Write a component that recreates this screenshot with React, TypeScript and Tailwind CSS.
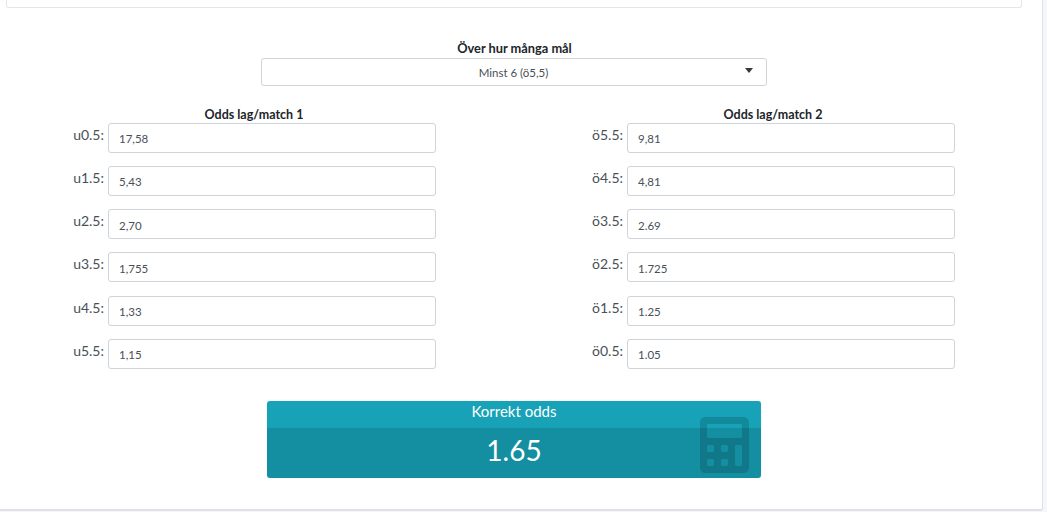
import { FaCalculator } from "react-icons/fa";

const leftRows = [
  ["u0.5:", "17,58"],
  ["u1.5:", "5,43"],
  ["u2.5:", "2,70"],
  ["u3.5:", "1,755"],
  ["u4.5:", "1,33"],
  ["u5.5:", "1,15"],
];

const rightRows = [
  ["ö5.5:", "9,81"],
  ["ö4.5:", "4,81"],
  ["ö3.5:", "2.69"],
  ["ö2.5:", "1.725"],
  ["ö1.5:", "1.25"],
  ["ö0.5:", "1.05"],
];

function OddsColumn({ title, rows }: { title: string; rows: string[][] }) {
  return (
    <div className="w-[328px]">
      {/* title is centred over label + input, not the input alone */}
      <div className="mr-[36px] text-center text-[12.5px] leading-[15px] font-bold text-[#212529] h-[15.6px]">{title}</div>
      <div className="flex flex-col gap-[13.25px]">
        {rows.map(([label, value]) => (
          <div key={label} className="relative">
            <span className="absolute right-[332px] top-[2px] text-[14px] leading-[20px] text-[#495057] whitespace-nowrap">{label}</span>
            <input
              readOnly
              defaultValue={value}
              className="block w-full h-[30px] pl-[10px] pt-[2px] border border-[#ced4da] rounded-[3px] bg-white text-[11.5px] text-[#495057] outline-none"
            />
          </div>
        ))}
      </div>
    </div>
  );
}

export default function App() {
  return (
    <div className="w-[1047px] h-[512px] overflow-hidden bg-[#f4f6f9] font-['Lato',sans-serif]">
      <div className="w-[1043px] h-[511px] bg-white border-r border-b-2 border-[#dee2e6] rounded-br-[3px]">
        {/* card above, cut off by the top of the page */}
        <div className="ml-[6px] w-[1016px] h-[8px] border-x border-b border-[#e3e6ea] rounded-b-[3px] bg-white"></div>

        <div className="mt-[32px] flex flex-col items-center pr-[15px]">
          <div className="pl-[2px] text-[12.8px] leading-[16px] font-bold text-[#212529]">Över hur många mål</div>
          <div className="relative mt-[2px] w-[506px] h-[28px] pt-[2px] border border-[#ced4da] rounded-[3px] flex items-center justify-center text-[11.5px] text-[#495057]">
            Minst 6 (ö5,5)
            <span className="absolute right-[13px] top-[9px] w-0 h-0 border-x-[4px] border-x-transparent border-t-[5px] border-t-[#343a40]"></span>
          </div>
        </div>

        <div className="mt-[21px] ml-[108px] flex gap-[191px]">
          <OddsColumn title="Odds lag/match 1" rows={leftRows} />
          <OddsColumn title="Odds lag/match 2" rows={rightRows} />
        </div>

        <div className="relative mt-[32.15px] ml-[267px] w-[494px] h-[77px] rounded-[3px] overflow-hidden shadow-[0_0_1px_rgba(0,0,0,0.2)] text-white text-center">
          <div className="h-[27px] bg-[#17a2b8] text-[15px] leading-[20px]">Korrekt odds</div>
          <div className="h-[50px] bg-[#148ea1] text-[28px] leading-[44px]">1.65</div>
          <FaCalculator className="absolute left-[433px] top-[16px] w-[49px] h-[56px] text-black/15" />
        </div>
      </div>
    </div>
  );
}
